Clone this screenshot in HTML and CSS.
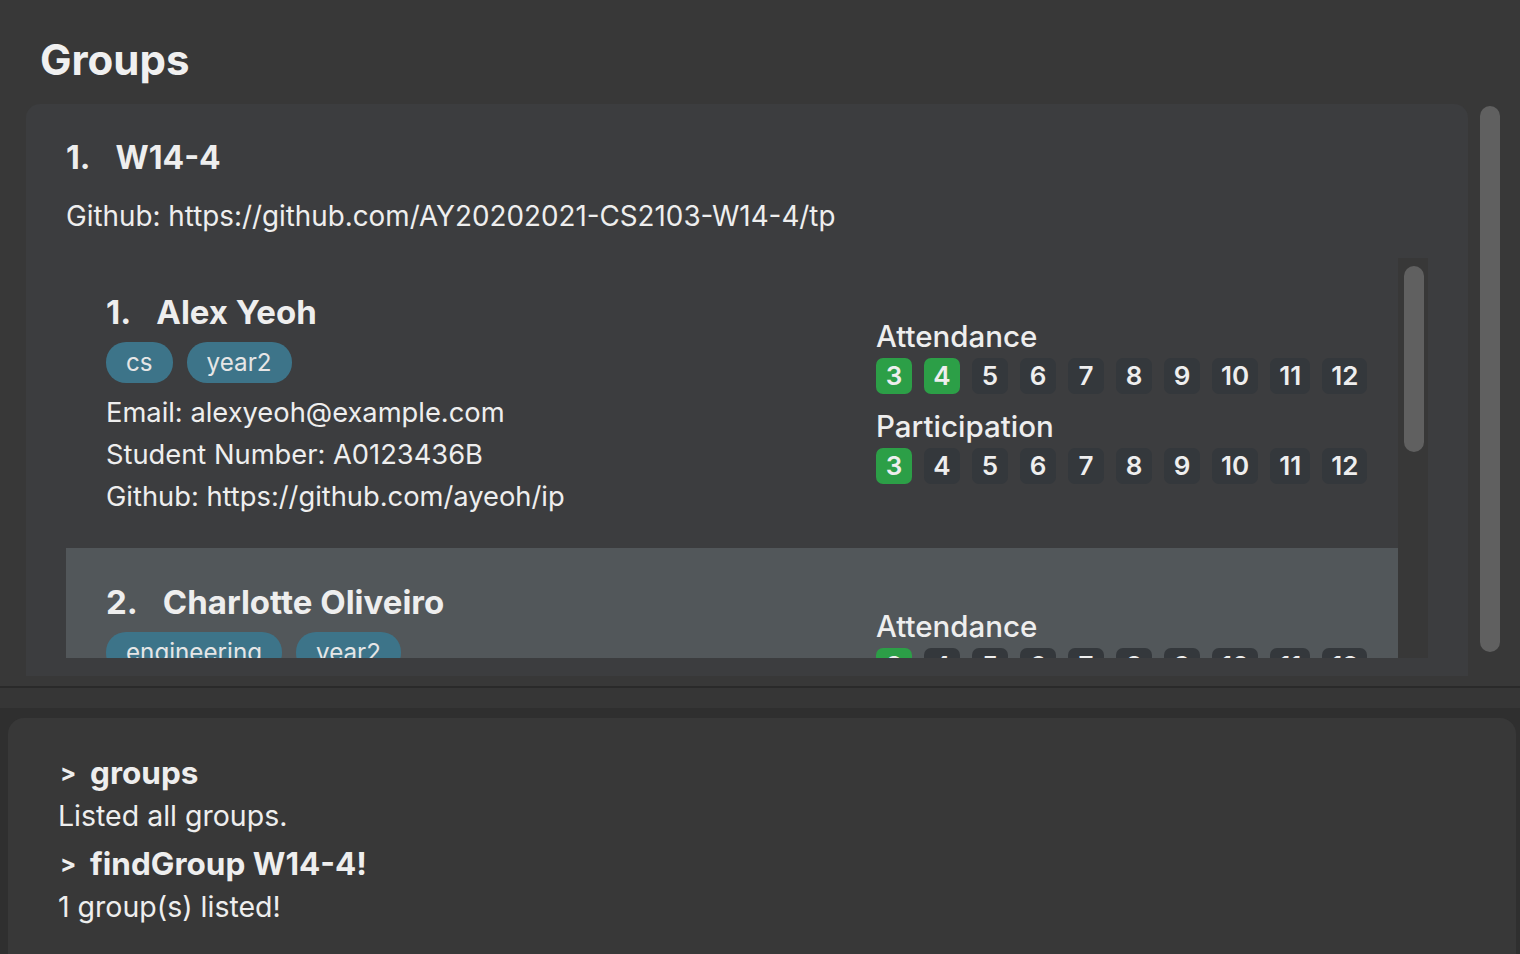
FILE: index.html
```html
<!DOCTYPE html>
<html>
<head>
<meta charset="utf-8">
<link rel="stylesheet" href="styles.css">
</head>
<body>
<div class="top">
  <h1 class="title">Groups</h1>
  <div class="top-row">
    <div class="card">
      <div class="group-head"><span class="num">1.</span><span>W14-4</span></div>
      <div class="group-github">Github: https://github.com/AY20202021-CS2103-W14-4/tp</div>
      <div class="inner">
        <div class="persons">
          <div class="person">
            <div class="p-left">
              <div class="p-name"><span class="num">1.</span><span>Alex Yeoh</span></div>
              <div class="tags"><span class="tag">cs</span><span class="tag">year2</span></div>
              <div class="p-line">Email: alexyeoh@example.com</div>
              <div class="p-line">Student Number: A0123436B</div>
              <div class="p-line">Github: https://github.com/ayeoh/ip</div>
            </div>
            <div class="p-right">
              <div class="sec-label">Attendance</div>
              <div class="chips">
                <span class="chip on">3</span><span class="chip on">4</span><span class="chip">5</span><span class="chip">6</span><span class="chip">7</span><span class="chip">8</span><span class="chip">9</span><span class="chip">10</span><span class="chip">11</span><span class="chip">12</span>
              </div>
              <div class="sec-label">Participation</div>
              <div class="chips">
                <span class="chip on">3</span><span class="chip">4</span><span class="chip">5</span><span class="chip">6</span><span class="chip">7</span><span class="chip">8</span><span class="chip">9</span><span class="chip">10</span><span class="chip">11</span><span class="chip">12</span>
              </div>
            </div>
          </div>
          <div class="person selected">
            <div class="p-left">
              <div class="p-name"><span class="num">2.</span><span>Charlotte Oliveiro</span></div>
              <div class="tags"><span class="tag">engineering</span><span class="tag">year2</span></div>
            </div>
            <div class="p-right">
              <div class="sec-label">Attendance</div>
              <div class="chips">
                <span class="chip on">3</span><span class="chip">4</span><span class="chip">5</span><span class="chip">6</span><span class="chip">7</span><span class="chip">8</span><span class="chip">9</span><span class="chip">10</span><span class="chip">11</span><span class="chip">12</span>
              </div>
            </div>
          </div>
        </div>
        <div class="track inner-track"><div class="thumb inner-thumb"></div></div>
      </div>
    </div>
    <div class="outer-track"><div class="thumb outer-thumb"></div></div>
  </div>
</div>
<div class="divider"></div>
<div class="strip"></div>
<div class="bottom">
  <div class="result">
    <div class="cmd"><span class="prompt">&gt;</span>groups</div>
    <div class="res">Listed all groups.</div>
    <div class="cmd"><span class="prompt">&gt;</span>findGroup W14-4!</div>
    <div class="res">1 group(s) listed!</div>
  </div>
</div>
</body>
</html>
```
FILE: styles.css
```css
* { box-sizing: border-box; }
html, body { margin: 0; padding: 0; }
body {
  width: 1520px;
  height: 954px;
  overflow: hidden;
  background: #383838;
  color: #eeeeee;
  font-family: "Inter", "DejaVu Sans", sans-serif;
}
.top {
  height: 686px;
  padding-left: 26px;
  display: flex;
  flex-direction: column;
}
.title {
  margin: 0;
  height: 104px;
  padding: 35px 0 0 14px;
  font-size: 42px;
  line-height: 50px;
  font-weight: 700;
  color: #f0f0f0;
}
.top-row {
  display: flex;
  height: 572px;
}
.card {
  width: 1442px;
  height: 572px;
  background: #3c3d3f;
  border-radius: 14px 14px 0 0;
  padding: 34px 40px 18px 40px;
  display: flex;
  flex-direction: column;
  overflow: hidden;
}
.group-head {
  font-size: 32px;
  font-weight: 700;
  line-height: 40px;
  display: flex;
}
.num { margin-right: 25px; }
.group-github {
  margin-top: 22px;
  font-size: 27.8px;
  line-height: 32px;
}
.inner {
  margin-top: 26px;
  flex: 1;
  display: flex;
  overflow: hidden;
}
.persons {
  flex: 1;
  overflow: hidden;
}
.person {
  display: flex;
  height: 290px;
  padding: 34px 0 0 40px;
}
.person.selected { background: #52575a; }
.p-left { width: 770px; }
.p-name {
  font-size: 33px;
  font-weight: 700;
  line-height: 40px;
  display: flex;
}
.tags {
  display: flex;
  gap: 14px;
  margin-top: 10px;
}
.tag {
  background: #3d7489;
  border-radius: 20px;
  height: 41px;
  padding: 0 20px;
  font-size: 24.2px;
  line-height: 41px;
  color: #e6e6e6;
}
.p-line {
  font-size: 27.3px;
  line-height: 42px;
}
.tags + .p-line { margin-top: 9px; }
.p-right {
  padding-top: 28px;
}
.sec-label {
  font-size: 29.5px;
  font-weight: 500;
  line-height: 32px;
}
.chips {
  display: flex;
  gap: 12px;
  margin-top: 6px;
  margin-bottom: 16px;
}
.chip {
  background: #34383c;
  border-radius: 7px;
  height: 36px;
  min-width: 36px;
  padding: 0 9px;
  text-align: center;
  font-size: 26px;
  font-weight: 600;
  line-height: 36px;
  color: #eeeeee;
}
.chip.on { background: #2c9f47; }
.track {
  background: #383838;
}
.inner-track {
  width: 30px;
  padding: 8px 4px 0 6px;
}
.thumb {
  background: #606060;
  border-radius: 10px;
}
.inner-thumb { height: 186px; }
.outer-track {
  width: 52px;
  padding: 2px 20px 0 12px;
}
.outer-thumb { height: 546px; }
.divider {
  height: 2px;
  background: #2a2a2a;
}
.strip {
  height: 20px;
  background: #363636;
}
.bottom {
  height: 246px;
  background: #2f2f2f;
  padding: 10px 4px 0 8px;
}
.result {
  height: 100%;
  background: #383838;
  border-radius: 16px 16px 0 0;
  padding: 35px 50px 0 50px;
}
.cmd {
  font-size: 31.5px;
  font-weight: 700;
  line-height: 40px;
  display: flex;
  align-items: center;
}
.cmd + .res { margin-top: 3px; }
.res + .cmd { margin-top: 8px; }
.prompt {
  font-size: 24px;
  width: 32px;
  padding-left: 2px;
}
.res {
  font-size: 28.5px;
  line-height: 40px;
}
```
